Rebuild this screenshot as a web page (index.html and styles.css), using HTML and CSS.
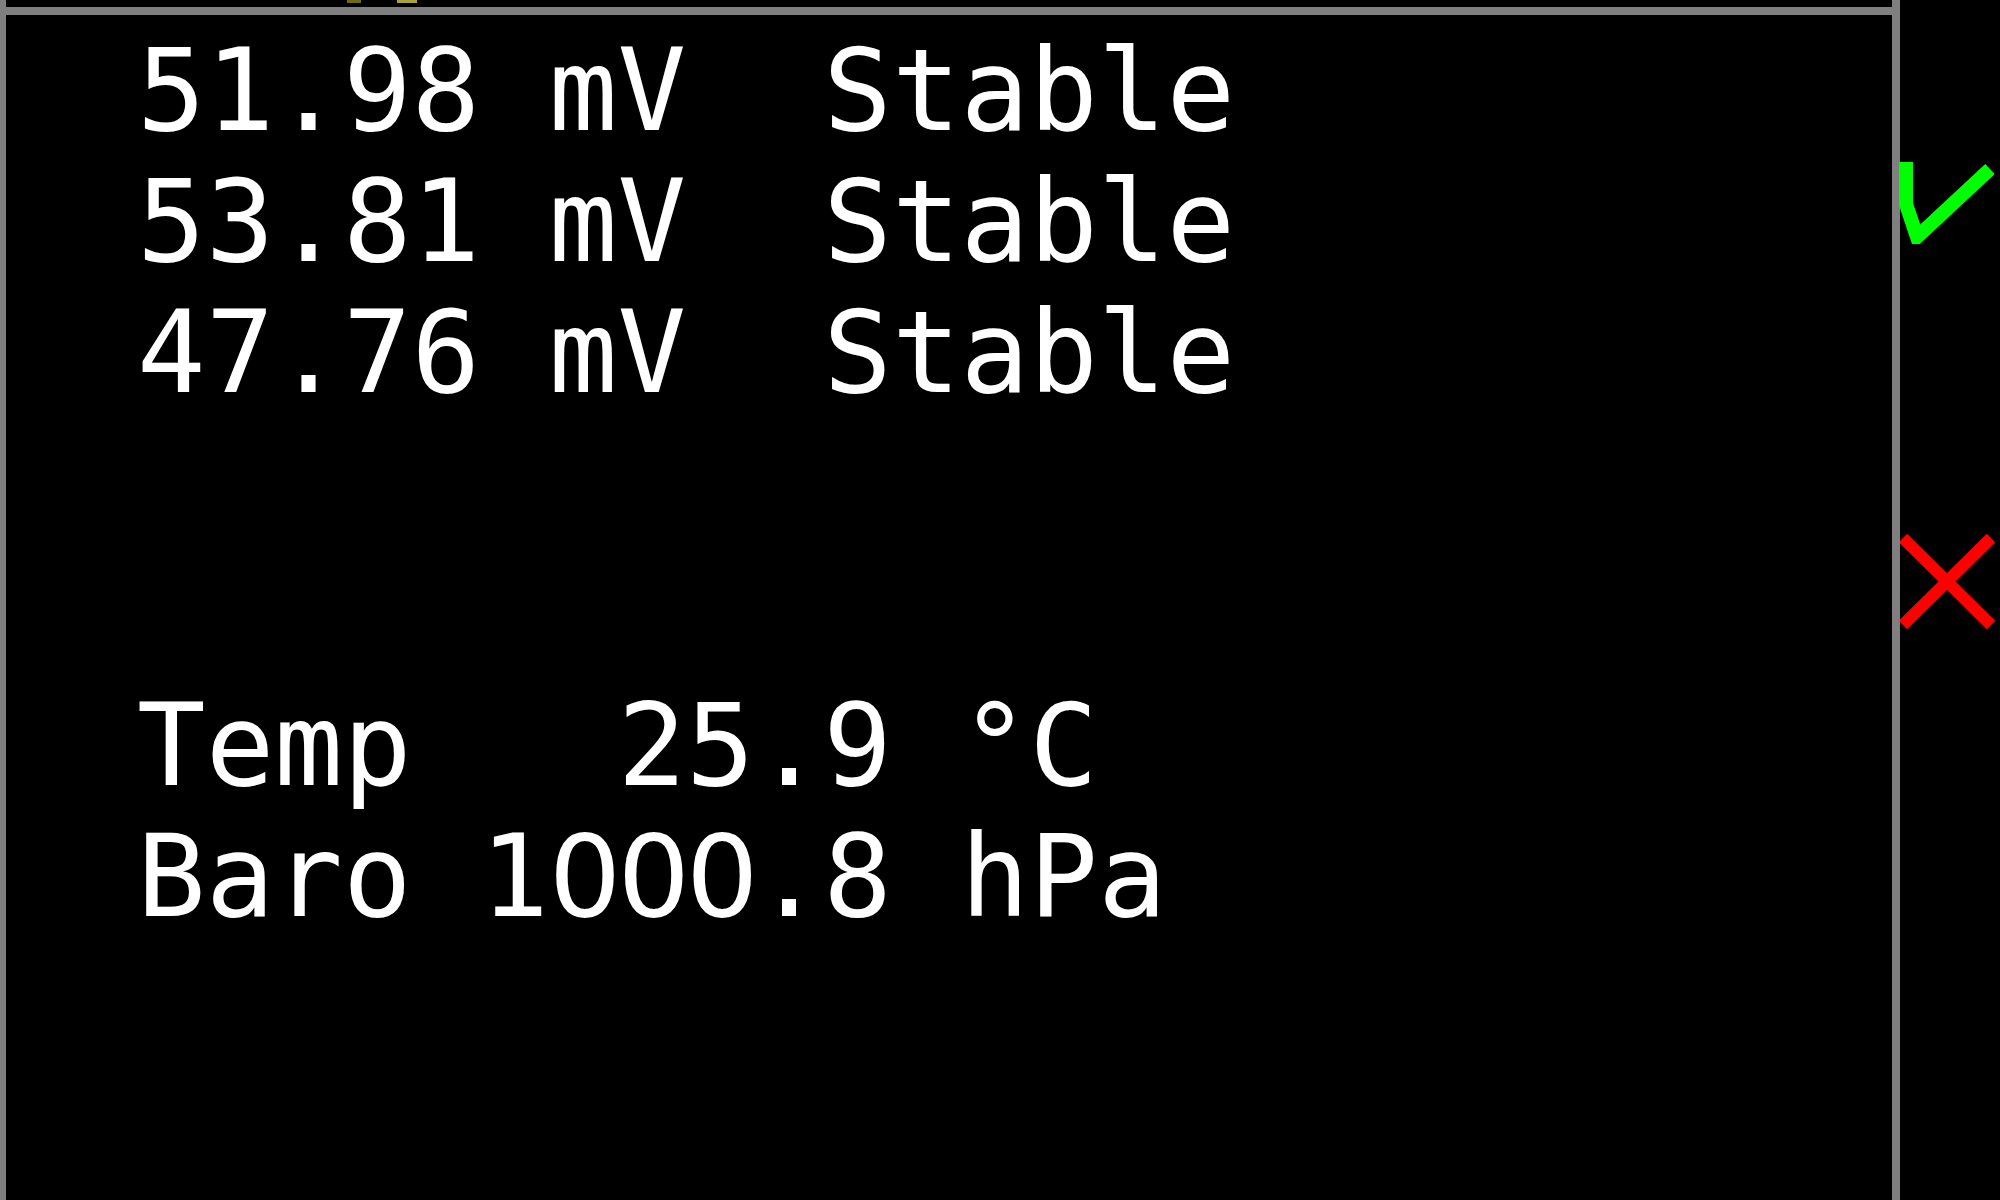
FILE: index.html
```
<!DOCTYPE html>
<html>
<head>
    <title>Sensor Readout</title>
    <link rel="stylesheet" href="styles.css">
</head>
<body>
    <div class="display">
        <div class="edge-left"></div>

        <div class="panel">
            <div class="top-strip">
                <span class="mark dim"></span>
                <span class="mark bright"></span>
            </div>
            <div class="rule"></div>

            <div class="readout">
                <div class="row">51.98 mV  Stable</div>
                <div class="row">53.81 mV  Stable</div>
                <div class="row">47.76 mV  Stable</div>
                <div class="row blank"></div>
                <div class="row blank"></div>
                <div class="row">Temp   25.9 °C</div>
                <div class="row">Baro 1<span class="zero">000</span>.8 hPa</div>
            </div>
        </div>

        <div class="edge-right"></div>

        <div class="status">
            <svg class="icon-ok" width="96" height="84" viewBox="0 0 96 84">
                <polyline points="8,2 8,44 19,77 92,9" fill="none" stroke="#00ff00" stroke-width="14" stroke-linejoin="miter"/>
            </svg>
            <svg class="icon-fail" width="96" height="96" viewBox="0 0 96 96">
                <line x1="3" y1="4" x2="91" y2="91" stroke="#ff0000" stroke-width="12"/>
                <line x1="91" y1="4" x2="3" y2="91" stroke="#ff0000" stroke-width="12"/>
            </svg>
        </div>
    </div>
</body>
</html>
```

FILE: styles.css
```
html, body {
    margin: 0;
    padding: 0;
    background-color: #000;
}
body {
    width: 2000px;
    height: 1200px;
    overflow: hidden;
}
.display {
    display: flex;
    height: 1200px;
}
.edge-left {
    width: 6px;
    flex-shrink: 0;
    background-color: #7f7f7f;
}
.edge-right {
    width: 8px;
    flex-shrink: 0;
    background-color: #7f7f7f;
}
.panel {
    width: 1886px;
    flex-shrink: 0;
    display: flex;
    flex-direction: column;
}
.top-strip {
    height: 7px;
    flex-shrink: 0;
    display: flex;
    align-items: flex-start;
}
.mark {
    height: 3px;
}
.mark.dim {
    width: 14px;
    margin-left: 341px;
    background-color: #6e6a12;
}
.mark.bright {
    width: 20px;
    margin-left: 36px;
    background-color: #a8a43a;
}
.rule {
    height: 8px;
    flex-shrink: 0;
    background-color: #7f7f7f;
}
.readout {
    padding: 10px 0 0 131px;
    font-family: "DejaVu Sans Mono", "Liberation Mono", monospace;
    font-size: 114px;
    line-height: 131px;
    color: #fff;
}
.row {
    height: 131px;
    white-space: pre;
}
/* plain zeros, no dot in the middle */
.zero {
    font-family: "DejaVu Sans", sans-serif;
    letter-spacing: -3.9px;
}
.status {
    width: 100px;
    display: flex;
    flex-direction: column;
    align-items: flex-start;
    padding-top: 160px;
}
.icon-ok {
    margin-left: -2px;
}
.icon-fail {
    margin-top: 290px;
}
```
